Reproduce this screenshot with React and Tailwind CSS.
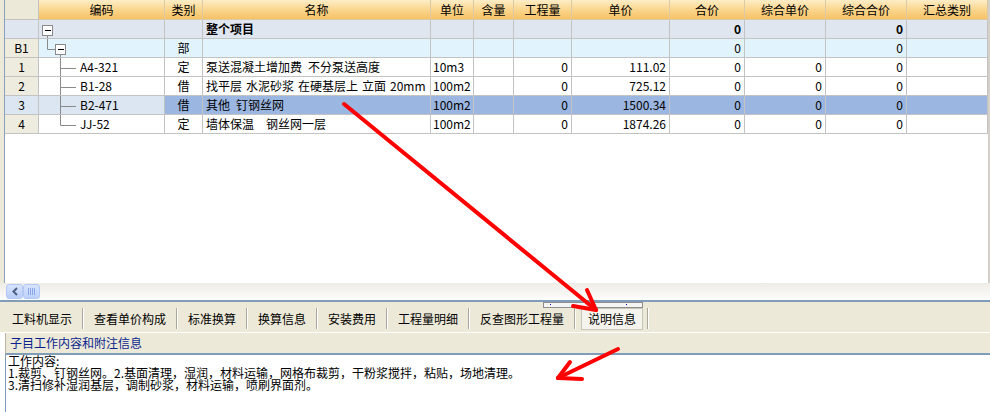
import React from 'react';

const COLS = 'grid-cols-[34px_126px_38px_228px_43px_40px_58px_98px_75px_81px_81px_81px]';

const HEADERS = ['', '编码', '类别', '名称', '单位', '含量', '工程量', '单价', '合价', '综合单价', '综合合价', '汇总类别'];

const ROWS = [
  { no: '', code: '', tree: 'root', type: '', name: '整个项目', unit: '', qty: '', price: '', total: '0', cprice: '', ctotal: '0', kind: 'top' },
  { no: 'B1', code: '', tree: 'b1', type: '部', name: '', unit: '', qty: '', price: '', total: '0', cprice: '', ctotal: '0', kind: 'part' },
  { no: '1', code: 'A4-321', tree: 'mid', type: '定', name: '泵送混凝土增加费\u2002不分泵送高度', unit: '10m3', qty: '0', price: '111.02', total: '0', cprice: '0', ctotal: '0' },
  { no: '2', code: 'B1-28', tree: 'mid', type: '借', name: '找平层\u2004水泥砂浆\u2004在硬基层上\u2004立面\u200420mm', unit: '100m2', qty: '0', price: '725.12', total: '0', cprice: '0', ctotal: '0' },
  { no: '3', code: 'B2-471', tree: 'mid', type: '借', name: '其他\u2002钉钢丝网', unit: '100m2', qty: '0', price: '1500.34', total: '0', cprice: '0', ctotal: '0', kind: 'sel' },
  { no: '4', code: 'JJ-52', tree: 'last', type: '定', name: '墙体保温\u2002\u2002钢丝网一层', unit: '100m2', qty: '0', price: '1874.26', total: '0', cprice: '0', ctotal: '0' },
];

const TABS = ['工料机显示', '查看单价构成', '标准换算', '换算信息', '安装费用', '工程量明细', '反查图形工程量'];

function MinusBox({ x, y }) {
  return (
    <g>
      <rect x={x + 0.5} y={y + 0.5} width="10" height="10" fill="#fff" stroke="#8a8a8a" />
      <line x1={x + 3} y1={y + 5.5} x2={x + 9} y2={y + 5.5} stroke="#000" />
    </g>
  );
}

function Tree({ kind }) {
  return (
    <svg width="40" height="19" className="shrink-0">
      {kind === 'root' && (
        <>
          <line x1="8.5" y1="15" x2="8.5" y2="19" stroke="#8a8a8a" />
          <MinusBox x={3} y={5} />
        </>
      )}
      {kind === 'b1' && (
        <>
          <line x1="8.5" y1="0" x2="8.5" y2="10.5" stroke="#8a8a8a" />
          <line x1="8.5" y1="10.5" x2="16" y2="10.5" stroke="#8a8a8a" />
          <line x1="21.5" y1="15" x2="21.5" y2="19" stroke="#8a8a8a" />
          <MinusBox x={16} y={5} />
        </>
      )}
      {(kind === 'mid' || kind === 'last') && (
        <>
          <line x1="21.5" y1="0" x2="21.5" y2={kind === 'last' ? 10.5 : 19} stroke="#8a8a8a" />
          <line x1="21.5" y1="10.5" x2="37" y2="10.5" stroke="#8a8a8a" />
        </>
      )}
    </svg>
  );
}

function Row({ r }) {
  const bg =
    r.kind === 'top' ? 'bg-[#dfe6f0]' : r.kind === 'part' ? 'bg-[#e1f3fd]' : r.kind === 'sel' ? 'bg-[#9bb6e1]' : 'bg-white';
  const noBg = r.kind === 'top' ? 'bg-[#dfe6f0]' : r.kind === 'sel' ? 'bg-[#dce5f2]' : 'bg-[#eeebdf]';
  const codeBg = r.kind === 'sel' ? 'bg-[#dce5f2]' : bg;
  const bold = r.kind === 'top' ? 'font-bold' : '';
  const cell = 'h-[19px] border-r border-b border-[#c3c3c3] flex items-center whitespace-pre overflow-hidden';
  return (
    <div className={`grid ${COLS}`}>
      <div className={`${cell} ${noBg} justify-center`}>{r.no}</div>
      <div className={`${cell} ${codeBg}`}>
        <Tree kind={r.tree} />
        <span className="pl-[1px]">{r.code}</span>
      </div>
      <div className={`${cell} ${bg} justify-center`}>{r.type}</div>
      <div className={`${cell} ${bg} pl-[3px] ${bold}`}>{r.name}</div>
      <div className={`${cell} ${bg} pl-[2px]`}>{r.unit}</div>
      <div className={`${cell} ${bg}`}></div>
      <div className={`${cell} ${bg} justify-end pr-[3px]`}>{r.qty}</div>
      <div className={`${cell} ${bg} justify-end pr-[3px]`}>{r.price}</div>
      <div className={`${cell} ${bg} justify-end pr-[3px] ${bold}`}>{r.total}</div>
      <div className={`${cell} ${bg} justify-end pr-[3px]`}>{r.cprice}</div>
      <div className={`${cell} ${bg} justify-end pr-[3px] ${bold}`}>{r.ctotal}</div>
      <div className={`${cell} ${bg}`}></div>
    </div>
  );
}

function Arrows() {
  const s = { stroke: '#ff0000', strokeWidth: 4, strokeLinecap: 'round', fill: 'none' };
  return (
    <svg className="absolute inset-0 pointer-events-none" width="990" height="412">
      <line x1="344" y1="104" x2="596" y2="310" {...s} />
      <line x1="596" y1="310" x2="587" y2="290" {...s} />
      <line x1="596" y1="310" x2="573" y2="306" {...s} />
      <line x1="618" y1="349" x2="558" y2="378" {...s} />
      <line x1="558" y1="378" x2="570" y2="362" {...s} />
      <line x1="558" y1="378" x2="582" y2="379" {...s} />
    </svg>
  );
}

export default function App() {
  return (
    <div className="relative w-[990px] h-[412px] overflow-hidden bg-white text-[12px] leading-none text-black font-['Noto_Sans_CJK_SC','Noto_Sans',sans-serif]">
      {/* Grid panel */}
      <div className="flex h-[283px]">
        <div className="w-[5px] bg-[#ece9d8] border-r border-[#8aa1bd]" />
        <div className="flex-1 bg-white">
          <div className={`grid ${COLS}`}>
            {HEADERS.map((h, i) => (
              <div
                key={i}
                className={`h-[20px] flex items-center justify-center border-r border-b ${
                  i === 0
                    ? 'bg-[#ece9d8] border-[#c3c3c3]'
                    : 'bg-gradient-to-b from-[#fdedc6] via-[#fbd68e] to-[#f6c266] border-[#dcc9a6]'
                }`}
              >
                {h}
              </div>
            ))}
          </div>
          {ROWS.map((r, i) => (
            <Row key={i} r={r} />
          ))}
        </div>
        <div className="w-[2px] bg-[#d4d0c8]" />
      </div>

      {/* Horizontal scrollbar */}
      <div className="flex h-[17px] pl-[6px] pt-[1px] bg-gradient-to-b from-[#eeece6] to-[#fdfdfc]">
        <div className="w-[17px] h-[15px] rounded-[3px] border border-[#b4c8f6] bg-gradient-to-b from-[#d8e4fd] to-[#b9cdf7] flex items-center justify-center">
          <svg width="8" height="9" viewBox="0 0 8 9">
            <path d="M6 1 L2.5 4.5 L6 8" stroke="#4d6185" strokeWidth="2" fill="none" />
          </svg>
        </div>
        <div className="w-[17px] h-[15px] rounded-[3px] border border-[#b4c8f6] bg-gradient-to-b from-[#d8e4fd] to-[#bcd0f8] flex items-center justify-center gap-[1px]">
          <div className="w-[1px] h-[7px] bg-[#8aa5e8]" />
          <div className="w-[1px] h-[7px] bg-[#8aa5e8]" />
          <div className="w-[1px] h-[7px] bg-[#8aa5e8]" />
          <div className="w-[1px] h-[7px] bg-[#8aa5e8]" />
        </div>
      </div>

      {/* Tabs */}
      <div className="relative h-[32px] border-t-2 border-[#7f9db9] bg-[#ece9d8] flex items-start pt-[6px] pl-[2px]">
        {TABS.map((t) => (
          <React.Fragment key={t}>
            <div className="h-[21px] px-[10px] flex items-center">{t}</div>
            <div className="w-[2px] h-[21px] border-l border-[#aca899] border-r border-r-white" />
          </React.Fragment>
        ))}
        <div className="ml-[5px] h-[22px] px-[6px] flex items-center bg-[#f4f3ee] border border-[#c9c6b8]">说明信息</div>
        <div className="ml-[4px] w-[2px] h-[21px] border-l border-[#aca899] border-r border-r-white" />
        <div className="absolute left-[543px] top-[0px] w-[100px] h-[6px] border border-[#8e8e8e] bg-[#f5f5f5]">
          <div className="absolute left-[6px] top-[1px] w-[1px] h-[1px] bg-[#0000c0]" />
          <div className="absolute left-[82px] top-[1px] w-[1px] h-[1px] bg-[#0000c0]" />
        </div>
      </div>

      {/* Info header */}
      <div className="mt-[1px] ml-[5px] h-[22px] bg-[#ece9d8] border-b-2 border-[#7f9db9] border-l border-l-[#b9b5a4] flex items-center pl-[4px] text-[#0b1f8f]">
        子目工作内容和附注信息
      </div>

      {/* Text area */}
      <div className="ml-[5px] h-[60px] border-l border-[#7f9db9] bg-white pl-[2px] leading-[12px] whitespace-nowrap">
        <div>工作内容:</div>
        <div>1.裁剪、钉钢丝网。2.基面清理，湿润，材料运输，网格布裁剪，干粉浆搅拌，粘贴，场地清理。</div>
        <div>3.清扫修补湿润基层，调制砂浆，材料运输，喷刷界面剂。</div>
      </div>

      <Arrows />
    </div>
  );
}
